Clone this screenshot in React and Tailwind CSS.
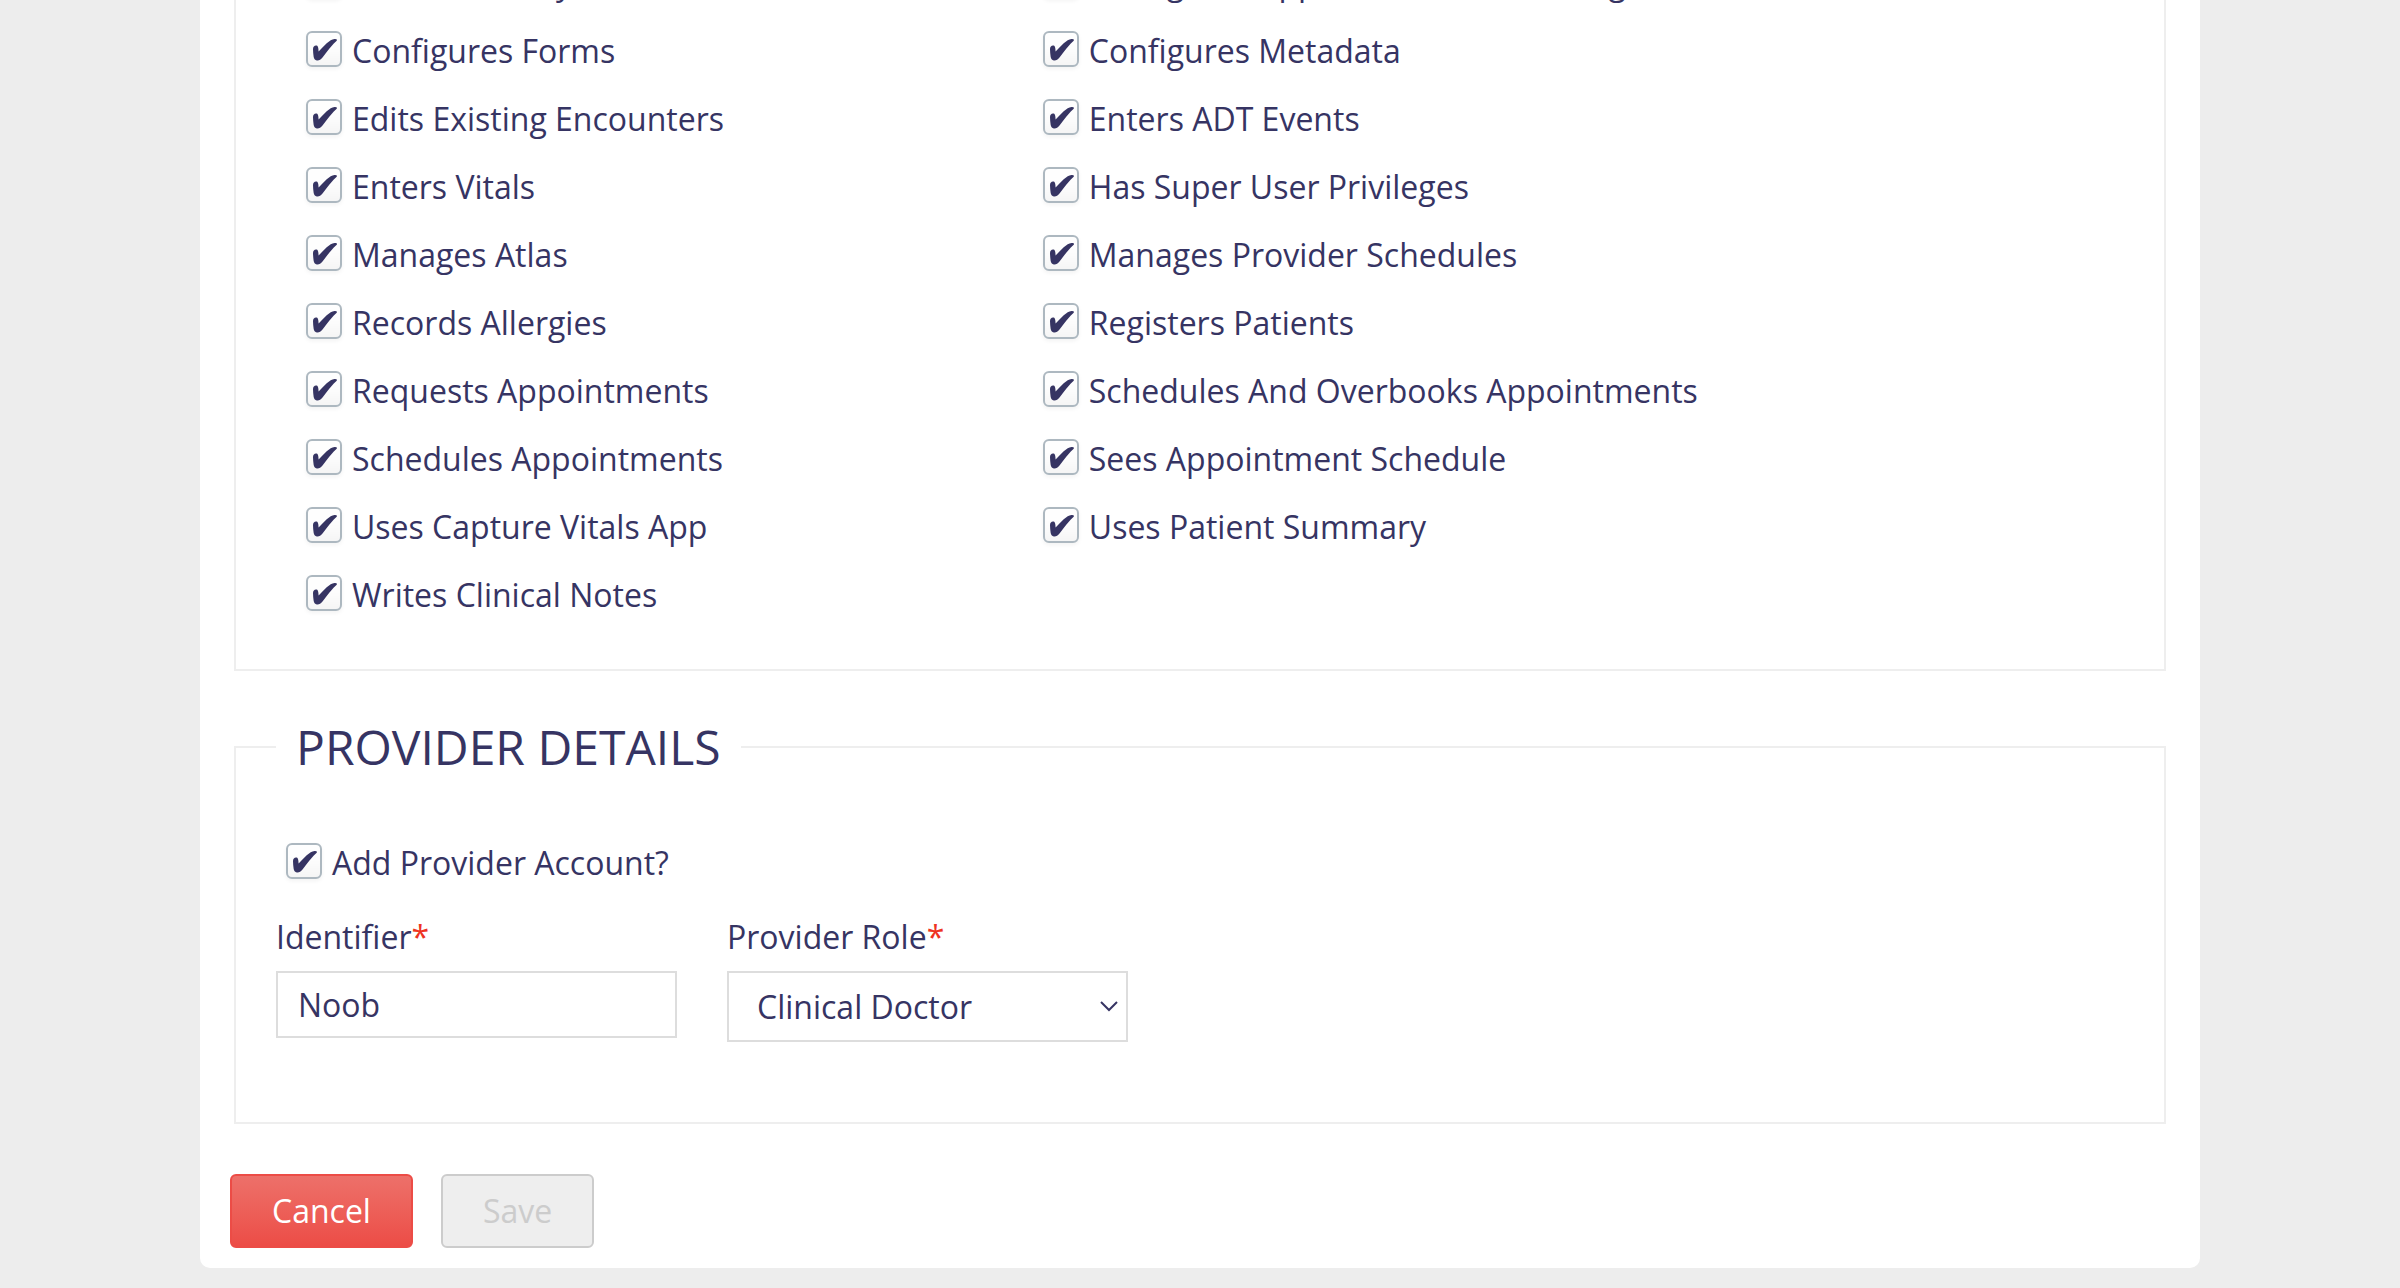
const privileges = [
  "Administers System",
  "Configures Appointment Scheduling",
  "Configures Forms",
  "Configures Metadata",
  "Edits Existing Encounters",
  "Enters ADT Events",
  "Enters Vitals",
  "Has Super User Privileges",
  "Manages Atlas",
  "Manages Provider Schedules",
  "Records Allergies",
  "Registers Patients",
  "Requests Appointments",
  "Schedules And Overbooks Appointments",
  "Schedules Appointments",
  "Sees Appointment Schedule",
  "Uses Capture Vitals App",
  "Uses Patient Summary",
  "Writes Clinical Notes",
];

function Checkbox({ label }) {
  return (
    <label className="flex items-start gap-2.5">
      <span className="relative size-9 shrink-0">
        <input
          type="checkbox"
          defaultChecked
          className="peer block size-9 appearance-none rounded-md border-2 border-[#adb8c0] bg-[#fefefe] shadow-[0_2px_4px_rgba(0,0,0,0.05),inset_0_-30px_20px_-24px_rgba(0,0,0,0.05)]"
        />
        <svg
          viewBox="0 0 36 36"
          aria-hidden="true"
          className="pointer-events-none absolute inset-0 size-9 fill-[#363463] opacity-0 peer-checked:opacity-100"
        >
          <path d="M7 18C7 15.800 8.300 14.500 10 14.400C12 14.400 12.400 16 12.600 20.600C15 18 17.800 15 20.700 12.300C23.500 9.700 26 8.200 28.500 7.900C31.200 7.700 31.600 8.900 30.200 10.300C27 13.300 23.800 17 20.700 20.900L16.500 26.600C14.800 28.800 12.800 29.700 10.800 29.400C8.900 29 7.900 27.800 7.600 25.500C7.300 23 7 20.500 7 18Z" />
        </svg>
      </span>
      <span>{label}</span>
    </label>
  );
}

function Required() {
  return <span className="text-[#ee3322]">*</span>;
}

export default function App() {
  return (
    <div className="min-h-screen overflow-hidden bg-[#ededed] px-[200px] pb-5 font-['Open_Sans',sans-serif] text-[32px] leading-10 text-[#363463]">
      <form className="-mt-10 rounded-b-[10px] bg-white px-[34px] pb-5">
        <fieldset
          aria-label="Privileges"
          className="grid grid-cols-[2fr_3fr] gap-y-7 border-2 border-t-0 border-[#eeeeee] pt-[3px] pr-4 pb-[54px] pl-[70px]"
        >
          {privileges.map((name) => (
            <Checkbox key={name} label={name} />
          ))}
        </fieldset>

        <fieldset className="mt-[42px] border-2 border-[#eeeeee] px-10 pt-[62px] pb-20">
          <legend className="px-5 text-[48px] leading-[68px]">PROVIDER DETAILS</legend>
          <div className="flex pl-[10px]">
            <Checkbox label="Add Provider Account?" />
          </div>
          <div className="mt-[34px] flex items-start gap-[50px]">
            <div className="flex w-[401px] flex-col gap-3.5">
              <label htmlFor="identifier">
                Identifier
                <Required />
              </label>
              <input
                id="identifier"
                type="text"
                defaultValue="Noob"
                className="h-[67px] w-full border-2 border-[#dddddd] bg-white px-5"
              />
            </div>
            <div className="flex w-[401px] flex-col gap-3.5">
              <label htmlFor="role">
                Provider Role
                <Required />
              </label>
              <div className="relative">
                <select
                  id="role"
                  defaultValue="Clinical Doctor"
                  className="block h-[71px] w-full appearance-none border-2 border-[#dddddd] bg-white px-7"
                >
                  <option>Clinical Doctor</option>
                </select>
                <svg
                  viewBox="0 0 18 12"
                  aria-hidden="true"
                  className="pointer-events-none absolute top-[29px] right-2.5 h-3 w-[18px] fill-none stroke-[#363463] stroke-2"
                >
                  <path d="M1 2l8 8 8-8" />
                </svg>
              </div>
            </div>
          </div>
        </fieldset>

        <div className="mt-[50px] -ml-1 flex gap-7">
          <button
            type="button"
            className="h-[74px] rounded-md border-2 border-[#ec4c46] bg-linear-to-b from-[#ed706a] to-[#ec4c46] px-10 text-white"
          >
            Cancel
          </button>
          <button
            type="submit"
            disabled
            className="h-[74px] rounded-md border-2 border-[#cccccc] bg-[#eeeeee] px-10 text-[#cccccc]"
          >
            Save
          </button>
        </div>
      </form>
    </div>
  );
}
